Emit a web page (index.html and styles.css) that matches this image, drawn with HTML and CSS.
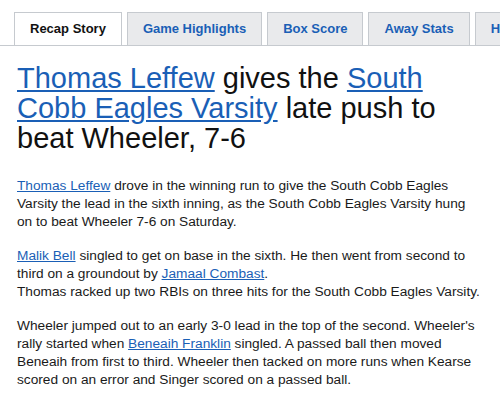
FILE: index.html
```html
<!DOCTYPE html>
<html>
<head>
<meta charset="utf-8">
<link rel="stylesheet" href="styles.css">
</head>
<body>
<nav class="tabs">
  <a class="tab active">Recap Story</a>
  <a class="tab">Game Highlights</a>
  <a class="tab">Box Score</a>
  <a class="tab">Away Stats</a>
  <a class="tab">Home Stats</a>
</nav>
<article class="story">
  <h1 class="headline"><a href="#">Thomas Leffew</a> gives the <a href="#">South Cobb Eagles Varsity</a> late push to beat Wheeler, 7-6</h1>
  <p><a href="#">Thomas Leffew</a> drove in the winning run to give the South Cobb Eagles Varsity the lead in the sixth inning, as the South Cobb Eagles Varsity hung on to beat Wheeler 7-6 on Saturday.</p>
  <p><a href="#">Malik Bell</a> singled to get on base in the sixth. He then went from second to third on a groundout by <a href="#">Jamaal Combast</a>.<br>Thomas racked up two RBIs on three hits for the South Cobb Eagles Varsity.</p>
  <p>Wheeler jumped out to an early 3-0 lead in the top of the second. Wheeler's rally started when <a href="#">Beneaih Franklin</a> singled. A passed ball then moved Beneaih from first to third. Wheeler then tacked on more runs when Kearse scored on an error and Singer scored on a passed ball.</p>
</article>
</body>
</html>
```
FILE: styles.css
```css
html, body {
  margin: 0;
  padding: 0;
  background: #fff;
  font-family: "Liberation Sans", Arial, Helvetica, sans-serif;
  color: #111;
}
.tabs {
  display: flex;
  gap: 5px;
  padding: 12px 0 0 14px;
  border-bottom: 1px solid #c6cacf;
  overflow: hidden;
  white-space: nowrap;
}
.tab {
  flex: none;
  display: block;
  height: 32px;
  line-height: 32px;
  padding: 0 15px;
  border: 1px solid #c6cacf;
  border-bottom: none;
  background: #e9eaec;
  color: #1a5fb6;
  font-size: 13px;
  font-weight: bold;
}
.tab.active {
  background: #fff;
  color: #111;
  height: 33px;
  margin-bottom: -1px;
}
.story {
  padding: 0 18px 0 17px;
}
.headline {
  margin: 17px 0 24px;
  font-size: 29px;
  line-height: 30px;
  font-weight: normal;
  color: #111;
}
a {
  color: #1a5fb6;
}
.story p {
  font-size: 13.7px;
  line-height: 18px;
  margin: 0 0 16px;
  color: #1a1a1a;
}
```
